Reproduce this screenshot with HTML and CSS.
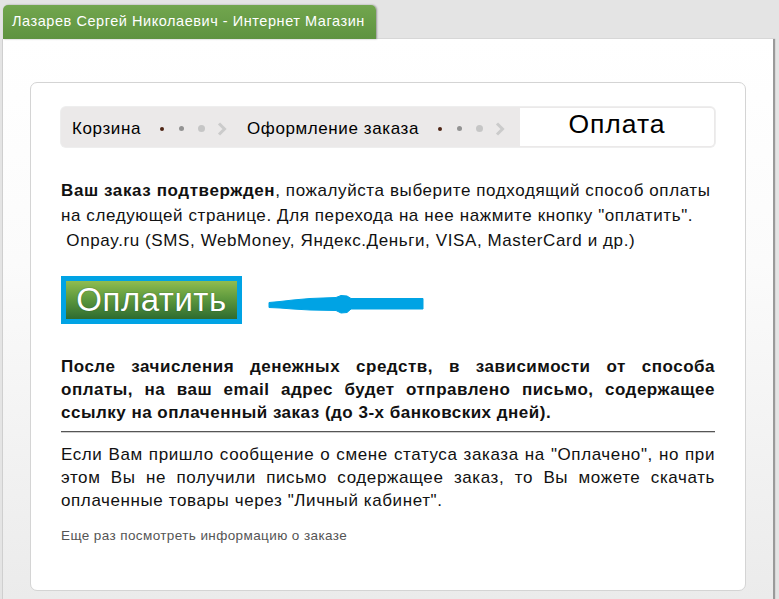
FILE: index.html
```html
<!DOCTYPE html>
<html lang="ru">
<head>
<meta charset="utf-8">
<link rel="stylesheet" href="styles.css">
</head>
<body>
<div class="wrap">
  <div class="tab">Лазарев Сергей Николаевич - Интернет Магазин</div>
  <div class="panel">
    <div class="card">
      <div class="steps">
        <div class="step first">Корзина</div>
        <div class="sep">
          <span class="slot"><span class="dot d1"></span></span>
          <span class="slot"><span class="dot d2"></span></span>
          <span class="slot"><span class="dot d3"></span></span>
          <span class="slot"><svg class="chev" width="10" height="14" viewBox="0 0 10 14"><path d="M2 1.5 L7.5 7 L2 12.5" fill="none" stroke="#cbcbcb" stroke-width="3"/></svg></span>
        </div>
        <div class="step">Оформление заказа</div>
        <div class="sep last">
          <span class="slot"><span class="dot d1"></span></span>
          <span class="slot"><span class="dot d2"></span></span>
          <span class="slot"><span class="dot d3"></span></span>
          <span class="slot"><svg class="chev" width="10" height="14" viewBox="0 0 10 14"><path d="M2 1.5 L7.5 7 L2 12.5" fill="none" stroke="#cbcbcb" stroke-width="3"/></svg></span>
        </div>
        <div class="step current">Оплата</div>
      </div>

      <p class="intro"><b>Ваш заказ подтвержден</b>, пожалуйста выберите подходящий способ оплаты на следующей странице. Для перехода на нее нажмите кнопку "оплатить".<br>&nbsp;Onpay.ru (SMS, WebMoney, Яндекс.Деньги, VISA, MasterCard и др.)</p>

      <div class="payrow">
        <div class="paybtn"><span>Оплатить</span></div>
        <svg class="arrow" width="160" height="30" viewBox="0 0 160 30">
          <path d="M1 17.5 L12 16.5 L25 15 L42 13.5 L68 12.5 L73 10.5 L79 11 L83 13.5 L155 13.5 L155 24 L83 24 L79 27.5 L73 28 L68 25.5 L42 25 L25 24 L12 23 L1 22.5 Z" fill="#00a3e4" stroke="#00a3e4" stroke-width="1" stroke-linejoin="round"/>
        </svg>
      </div>

      <p class="notice">После зачисления денежных средств, в зависимости от способа оплаты, на ваш email адрес будет отправлено письмо, содержащее ссылку на оплаченный заказ (до 3-х банковских дней).</p>
      <div class="rule"></div>
      <p class="info">Если Вам пришло сообщение о смене статуса заказа на "Оплачено", но при этом Вы не получили письмо содержащее заказ, то Вы можете скачать оплаченные товары через "Личный кабинет".</p>
      <a class="again" href="#">Еще раз посмотреть информацию о заказе</a>
    </div>
  </div>
</div>
</body>
</html>
```

FILE: styles.css
```css
html, body {
  margin: 0;
  padding: 0;
  background: #e4e4e4;
  height: 100%;
  overflow: hidden;
}
body {
  font-family: "Liberation Sans", Arial, sans-serif;
  color: #000;
}
.wrap {
  padding: 5px 0 0 3px;
}
.tab {
  width: 373px;
  height: 34px;
  box-sizing: border-box;
  padding: 8px 0 0 9px;
  background: linear-gradient(#72a64e, #5e9340);
  color: #fff;
  font-size: 14.5px;
  letter-spacing: 0.55px;
  white-space: nowrap;
  border-radius: 5px 5px 0 0;
  box-shadow: 1px 0 2px rgba(0,0,0,0.35);
  position: relative;
  z-index: 1;
}
.panel {
  width: 770px;
  height: 560px;
  box-sizing: border-box;
  padding: 43px 0 0 27px;
  background: linear-gradient(#ffffff 0%, #fbfbfb 40%, #ebebeb 100%);
  box-shadow: 2px 0 1px #9a9a9a, -1px 0 0 #cfcfcf;
}
.card {
  width: 716px;
  height: 509px;
  box-sizing: border-box;
  border: 1px solid #d4d4d4;
  border-radius: 7px;
  background: #fff;
  padding: 24px 30px 0 30px;
}
.steps {
  display: flex;
  align-items: stretch;
  height: 40px;
  background: #ebe9e9;
  border-radius: 5px;
  box-shadow: 0 0 0 1px #eeeeee;
}
.step {
  display: flex;
  align-items: center;
  font-size: 17px;
  letter-spacing: 0.6px;
  white-space: nowrap;
  padding-top: 3px;
}
.step.first {
  padding-left: 11px;
}
.step.current {
  flex: 1;
  justify-content: center;
  background: #fff;
  font-size: 26.5px;
  letter-spacing: 1px;
  padding-top: 0;
  padding-bottom: 5px;
  margin: 1px 1px 1px 0;
  border-radius: 0 4px 4px 0;
}
.sep {
  display: flex;
  align-items: center;
  padding: 3px 15px 0 11px;
}
.sep.last {
  padding-right: 10px;
}
.slot {
  width: 20px;
  display: flex;
  justify-content: center;
  align-items: center;
}
.dot {
  display: block;
  border-radius: 50%;
}
.d1 { width: 4px; height: 4px; background: #4e2414; }
.d2 { width: 5px; height: 5px; background: #939393; }
.d3 { width: 7px; height: 7px; background: #c6c6c6; }
.chev { display: block; }
.intro {
  margin: 31px 0 0 0;
  font-size: 17px;
  letter-spacing: 0.6px;
  line-height: 25px;
  color: #111;
}
.payrow {
  display: flex;
  align-items: center;
  margin-top: 23px;
}
.paybtn {
  width: 181px;
  height: 48px;
  box-sizing: border-box;
  border: 5px solid #00a3e4;
  background: linear-gradient(#90bc50 0%, #5f9a3e 45%, #2e6b30 100%);
  display: flex;
  align-items: center;
  justify-content: center;
}
.paybtn span {
  color: #fff;
  font-size: 33px;
  letter-spacing: 0.5px;
  text-shadow: 0 0 1px #1a4a1a;
}
.arrow {
  margin-left: 26px;
}
.notice {
  margin: 31px 0 0 0;
  font-size: 17px;
  letter-spacing: 0.5px;
  font-weight: bold;
  line-height: 23px;
  text-align: justify;
  color: #111;
}
.rule {
  margin-top: 7px;
  height: 2px;
  background: linear-gradient(#555 50%, #cfcfcf 50%);
}
.info {
  margin: 10px 0 0 0;
  font-size: 17px;
  letter-spacing: 0.6px;
  line-height: 23px;
  text-align: justify;
  color: #111;
}
.again {
  display: block;
  margin-top: 16px;
  font-size: 13.5px;
  letter-spacing: 0.4px;
  color: #555;
  text-decoration: none;
}
```
